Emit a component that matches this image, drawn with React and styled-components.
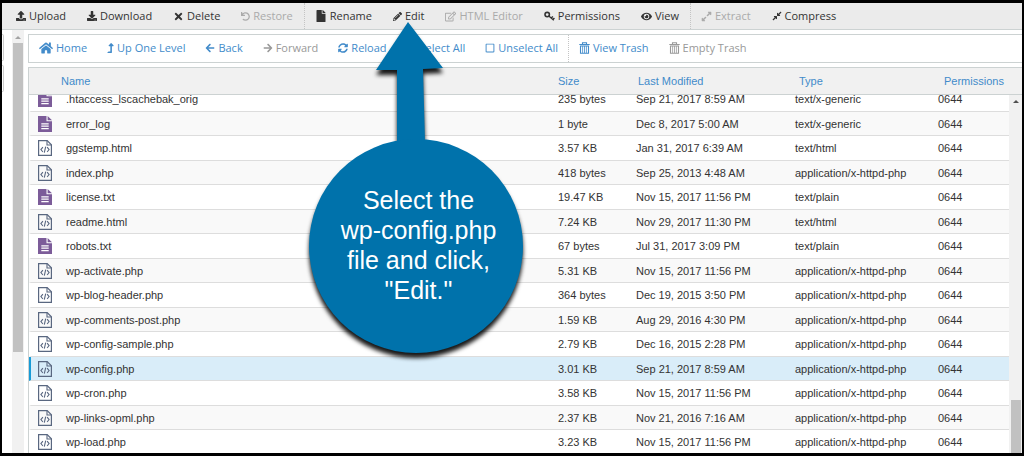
import React from 'react'
import styled, {createGlobalStyle} from 'styled-components'
import {
    FaUpload, FaDownload, FaTimes, FaUndo, FaFile, FaPencilAlt, FaRegEdit, FaEye,
    FaExpandAlt, FaCompressAlt, FaHome, FaLevelUpAlt, FaArrowLeft, FaArrowRight, FaSyncAlt,
    FaRegCheckSquare, FaRegSquare
} from 'react-icons/fa'

const files = [
    {name: '.htaccess_lscachebak_orig', size: '235 bytes', date: 'Sep 21, 2017 8:59 AM', type: 'text/x-generic'},
    {name: 'error_log', size: '1 byte', date: 'Dec 8, 2017 5:00 AM', type: 'text/x-generic'},
    {name: 'ggstemp.html', size: '3.57 KB', date: 'Jan 31, 2017 6:39 AM', type: 'text/html'},
    {name: 'index.php', size: '418 bytes', date: 'Sep 25, 2013 4:48 AM', type: 'application/x-httpd-php'},
    {name: 'license.txt', size: '19.47 KB', date: 'Nov 15, 2017 11:56 PM', type: 'text/plain'},
    {name: 'readme.html', size: '7.24 KB', date: 'Nov 29, 2017 11:30 PM', type: 'text/html'},
    {name: 'robots.txt', size: '67 bytes', date: 'Jul 31, 2017 3:09 PM', type: 'text/plain'},
    {name: 'wp-activate.php', size: '5.31 KB', date: 'Nov 15, 2017 11:56 PM', type: 'application/x-httpd-php'},
    {name: 'wp-blog-header.php', size: '364 bytes', date: 'Dec 19, 2015 3:50 PM', type: 'application/x-httpd-php'},
    {name: 'wp-comments-post.php', size: '1.59 KB', date: 'Aug 29, 2016 4:30 PM', type: 'application/x-httpd-php'},
    {name: 'wp-config-sample.php', size: '2.79 KB', date: 'Dec 16, 2015 2:28 PM', type: 'application/x-httpd-php'},
    {name: 'wp-config.php', size: '3.01 KB', date: 'Sep 21, 2017 8:59 AM', type: 'application/x-httpd-php', selected: true},
    {name: 'wp-cron.php', size: '3.58 KB', date: 'Nov 15, 2017 11:56 PM', type: 'application/x-httpd-php'},
    {name: 'wp-links-opml.php', size: '2.37 KB', date: 'Nov 21, 2016 7:16 AM', type: 'application/x-httpd-php'},
    {name: 'wp-load.php', size: '3.23 KB', date: 'Nov 15, 2017 11:56 PM', type: 'application/x-httpd-php'},
]

function TrashIcon() {
    return (
        <svg width="11" height="12" viewBox="0 0 11 12" fill="none" stroke="currentColor">
            <path d="M0.3 2.5h10.4M3.5 2.3V0.7h4v1.6" strokeWidth="1.1" />
            <path d="M1.5 4h8v7.3h-8z" strokeWidth="1.1" />
            <path d="M3.6 4v7M5.5 4v7M7.4 4v7" strokeWidth="0.8" />
        </svg>
    )
}

function KeyIcon() {
    return (
        <svg width="11" height="10" viewBox="0 0 11 10" fill="none" stroke="currentColor">
            <circle cx="3.2" cy="3.6" r="2.2" strokeWidth="1.6" />
            <path d="M4.8 5L9.8 9.2M7.4 7l1.4-1.6M9 8.4l1.4-1.5" strokeWidth="1.4" />
        </svg>
    )
}

function TextFileIcon() {
    return (
        <svg width="14" height="16" viewBox="0 0 14 16">
            <path d="M0 0h8.5v5.3H14V16H0z" fill="#7c5c99" />
            <path d="M9.6 0L14 4.3H9.6z" fill="#7c5c99" />
            <path d="M3.3 7.8h7.4M3.3 10.2h7.4M3.3 12.6h7.4" stroke="#fff" strokeWidth="1.3" />
        </svg>
    )
}

function CodeFileIcon() {
    return (
        <svg width="14" height="16" viewBox="0 0 14 16" fill="none" stroke="#596780">
            <path d="M0.6 0.6h8.6l4.2 4.2v10.6H0.6z" strokeWidth="1.2" />
            <path d="M9 0.8v4.2h4.2" strokeWidth="1.1" />
            <path d="M4.9 7.2L2.9 9.6l2 2.4M9.1 7.2l2 2.4-2 2.4M7.7 6.6l-1.4 6" strokeWidth="1.1" />
        </svg>
    )
}

function FileRow({file}) {
    const isCode = /\.(php|html)$/.test(file.name)
    return (
        <Row $selected={file.selected} aria-selected={!!file.selected}>
            <IconCell>{isCode ? <CodeFileIcon /> : <TextFileIcon />}</IconCell>
            <Cell>{file.name}</Cell>
            <Cell>{file.size}</Cell>
            <Cell>{file.date}</Cell>
            <Cell>{file.type}</Cell>
            <Cell>0644</Cell>
        </Row>
    )
}

function App() {
    return (
        <Window>
            <GlobalStyle />
            <Toolbar>
                <Group $gap={1}>
                    <Tool><FaUpload size={10} />Upload</Tool>
                    <Tool><FaDownload size={10} />Download</Tool>
                    <Tool><FaTimes size={11} />Delete</Tool>
                    <Tool disabled><FaUndo size={9} />Restore</Tool>
                </Group>
                <Group $gap={1}>
                    <Tool><FaFile size={12} />Rename</Tool>
                    <Tool><FaPencilAlt size={9} />Edit</Tool>
                    <Tool disabled><FaRegEdit size={11} />HTML Editor</Tool>
                    <Tool><KeyIcon />Permissions</Tool>
                    <Tool><FaEye size={11} />View</Tool>
                </Group>
                <Group $gap={1}>
                    <Tool disabled><FaExpandAlt size={11} />Extract</Tool>
                    <Tool><FaCompressAlt size={10} />Compress</Tool>
                </Group>
            </Toolbar>
            <Content>
                <Sidebar>
                    <SideBox />
                    <SideBox />
                </Sidebar>
                <SideTrack aria-hidden="true">
                    <ArrowUp $color="#a3a3a3" />
                    <SideThumb />
                </SideTrack>
                <Main>
                    <ActionBar>
                        <Group $gap={0}>
                            <Action><FaHome size={14} />Home</Action>
                            <Action><LevelUpIcon size={10} />Up One Level</Action>
                            <Action><FaArrowLeft size={10} />Back</Action>
                            <Action disabled><FaArrowRight size={10} />Forward</Action>
                            <Action><FaSyncAlt size={10} />Reload</Action>
                            <Action><FaRegCheckSquare size={10} />Select All</Action>
                            <Action><FaRegSquare size={10} />Unselect All</Action>
                        </Group>
                        <Group $gap={0}>
                            <Action><TrashIcon />View Trash</Action>
                            <Action disabled><TrashIcon />Empty Trash</Action>
                        </Group>
                    </ActionBar>
                    <ListPanel>
                        <FileTable>
                            <Head>
                                <HeadRow>
                                    <HeadCell>Name</HeadCell>
                                    <HeadCell>Size</HeadCell>
                                    <HeadCell>Last Modified</HeadCell>
                                    <HeadCell>Type</HeadCell>
                                    <HeadCell>Permissions</HeadCell>
                                </HeadRow>
                            </Head>
                            <Body>
                                {files.map(file => <FileRow key={file.name} file={file} />)}
                            </Body>
                        </FileTable>
                        <ListTrack aria-hidden="true">
                            <ArrowUp $color="#505050" />
                            <ListThumb />
                        </ListTrack>
                    </ListPanel>
                </Main>
            </Content>
            <Callout>
                <CalloutShape viewBox="0 0 216 332">
                    <path d="M100 0L135 46L115 47L117 120H89V48L68 48Z" />
                    <circle cx="108" cy="224" r="107" />
                </CalloutShape>
                <CalloutText>Select the<br />wp-config.php<br />file and click,<br />"Edit."</CalloutText>
            </Callout>
        </Window>
    )
}

export default App

const GlobalStyle = createGlobalStyle`
*{
    box-sizing: border-box;
}
body{
    margin: 0;
    background: #fff;
    font-family: "Liberation Sans", Arial, sans-serif;
    font-size: 11px;
    color: #333;
}
`
const Window = styled.div`
position: relative;
display: flex;
flex-direction: column;
height: 100vh;
overflow: hidden;
border: solid #000;
border-width: 3px 2px;
`
const Toolbar = styled.div`
display: flex;
flex-shrink: 0;
height: 27px;
padding-left: 4px;
background: #ebebeb;
border-bottom: 1px solid #ccd2d2;
`
const Group = styled.div`
display: flex;
gap: ${props => props.$gap}px;
padding-right: ${props => props.$gap}px;
& + &{
    padding-left: ${props => props.$gap * 2}px;
    border-left: 1px dotted #c4c4c4;
}
`
const Tool = styled.button`
display: flex;
align-items: center;
gap: 3px;
padding: 0 10px;
border: 0;
background: none;
color: #333;
font-family: "Open Sans", sans-serif;
font-size: 11px;
line-height: 16px;
white-space: nowrap;
cursor: pointer;
&:disabled{
    color: #aaa;
    cursor: default;
}
`
const Action = styled(Tool)`
padding-bottom: 1px;
color: #428bca;
&:disabled{
    color: #999;
}
`
const LevelUpIcon = styled(FaLevelUpAlt)`
width: 7px;
`
const Content = styled.div`
display: flex;
flex: 1;
min-height: 0;
`
const Sidebar = styled.div`
display: flex;
flex-direction: column;
gap: 4px;
width: 10px;
padding-top: 4px;
`
const SideBox = styled.div`
width: 2px;
height: 27px;
border: 1px solid #ccc;
border-left: 0;
border-radius: 0 2px 2px 0;
`
const SideTrack = styled.div`
display: flex;
flex-direction: column;
align-items: center;
width: 12px;
padding-top: 6px;
background: #f1f1f1;
`
const ArrowUp = styled.div`
border: 3px solid transparent;
border-top: 0;
border-bottom: 3px solid ${props => props.$color};
`
const SideThumb = styled.div`
width: 10px;
height: 74%;
margin-top: 4px;
background: #c1c1c1;
`
const Main = styled.div`
display: flex;
flex: 1;
flex-direction: column;
gap: 4px;
min-width: 0;
padding: 4px 0 0 4px;
`
const ActionBar = styled.div`
display: flex;
flex-shrink: 0;
height: 29px;
border: 1px solid #ccd2d2;
border-right: 0;
`
const ListPanel = styled.div`
display: flex;
flex: 1;
min-height: 0;
border: 1px solid #ccd2d2;
border-width: 1px 0 0 1px;
`
const FileTable = styled.table`
display: flex;
flex-direction: column;
flex: 1;
min-width: 0;
`
const Head = styled.thead`
display: block;
position: relative;
z-index: 1;
margin-right: -13px;
background: #f1f1f1;
border-bottom: 1px solid #ccd2d2;
`
const HeadRow = styled.tr`
display: grid;
grid-template-columns: 1fr 80px 161px 145px 78px;
height: 26px;
padding-left: 32px;
align-items: center;
`
const HeadCell = styled.th`
padding: 0;
color: #428bca;
font-weight: normal;
text-align: left;
`
const Body = styled.tbody`
display: block;
flex: 1;
min-height: 0;
overflow: hidden;
`
const Row = styled.tr`
display: grid;
grid-template-columns: 35px 1fr 78px 159px 143px 71px;
align-items: center;
height: 25px;
background: ${props => props.$selected ? '#d9edf9' : '#fff'};
border-bottom: 1px solid #ddd;
border-left: 2px solid ${props => props.$selected ? '#179bd7' : 'transparent'};
&:nth-child(even){
    height: 24px;
    background: ${props => props.$selected ? '#d9edf9' : '#f9f9f9'};
}
&:first-child{
    margin-top: -8px;
}
`
const Cell = styled.td`
padding: 0;
white-space: nowrap;
`
const IconCell = styled(Cell)`
display: flex;
padding-left: 7px;
`
const ListTrack = styled.div`
display: flex;
flex-direction: column;
align-items: center;
width: 13px;
padding-top: 32px;
background: #f1f1f1;
`
const ListThumb = styled.div`
width: 10px;
height: 53px;
margin-top: auto;
background: #c1c1c1;
`
const Callout = styled.div`
position: absolute;
z-index: 2;
top: 19px;
left: 306px;
width: 216px;
`
const CalloutShape = styled.svg`
display: block;
fill: #0072ab;
filter: drop-shadow(0 5px 2px rgba(0, 0, 0, 0.9));
`
const CalloutText = styled.p`
position: absolute;
top: 163px;
left: 0;
width: 100%;
margin: 0;
padding-left: 5px;
color: #fff;
font-size: 25px;
line-height: 30px;
text-align: center;
`
